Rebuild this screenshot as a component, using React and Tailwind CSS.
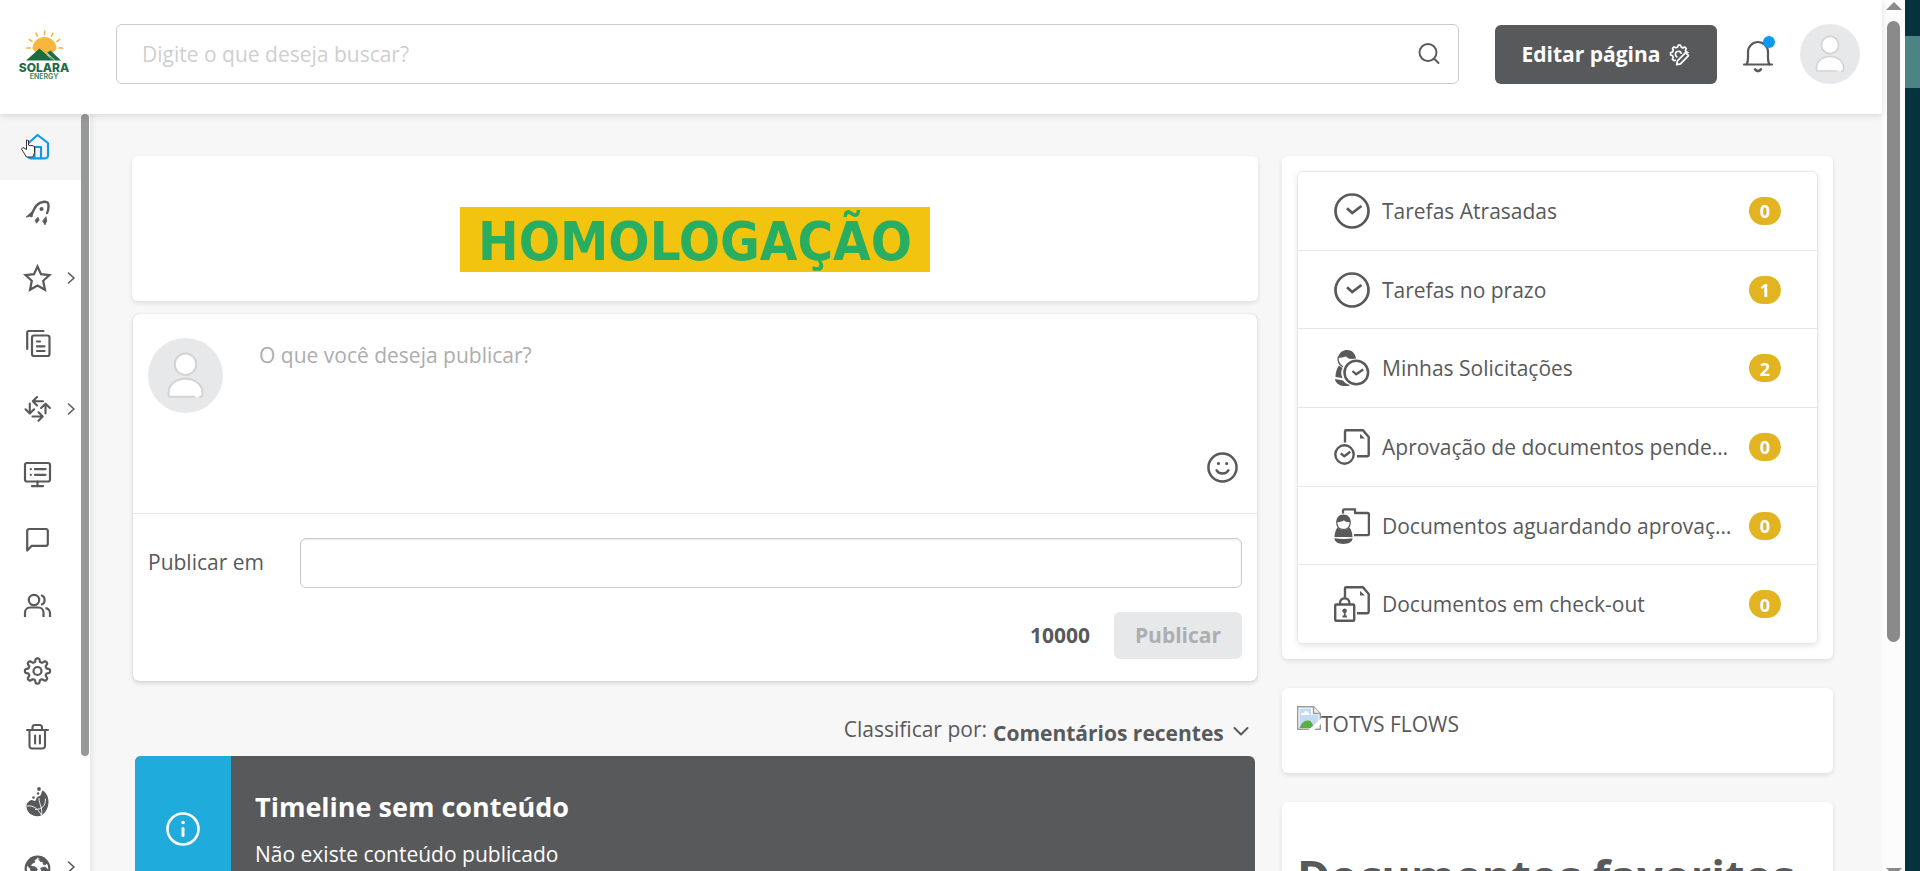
import React from "react";

const gearPoints = (cx, cy, inner, depth, teeth) =>
  Array.from({ length: 160 }, (_, i) => {
    const a = (i / 160) * Math.PI * 2;
    const r = inner + depth * Math.tanh(2.2 * Math.cos(teeth * a));
    return `${(cx + r * Math.cos(a)).toFixed(2)},${(cy + r * Math.sin(a)).toFixed(2)}`;
  }).join(" ");

function Icon({ size = "h-8 w-8", box = "0 0 32 32", width = 2.2, children }) {
  return (
    <svg
      className={`${size} shrink-0`}
      viewBox={box}
      fill="none"
      stroke="currentColor"
      strokeWidth={width}
      strokeLinecap="round"
      strokeLinejoin="round"
      aria-hidden="true"
    >
      {children}
    </svg>
  );
}

const icons = {
  home: (
    <Icon>
      <path d="M6 12.500 15.500 4l10.500 8V24.500a2.800 2.800 0 0 1-2.800 2.800H8.500a2.500 2.500 0 0 1-2.500-2.500z" />
      <path d="M12.500 27V16h6.500v11" />
    </Icon>
  ),
  rocket: (
    <Icon width={2.4}>
      <path d="M9 19c3-3 3-12 13-13.200 4-.300 4.500 1.500 4.500 4.500 0 3-.400 5-1.400 6.700" />
      <path d="M4.500 20.800 11 14.800l-1 6.200-2-.800z" fill="currentColor" strokeWidth="1" />
      <circle cx="19.500" cy="13" r="2" fill="currentColor" stroke="none" />
      <path d="m16 21.500 1.200 2.500-2.700 3.200-1.200-2.700zM24 21l.8 3.800-1.800 4-2.200-3.500z" fill="currentColor" strokeWidth=".8" />
    </Icon>
  ),
  star: (
    <Icon>
      <path strokeLinejoin="miter" d="m15.500 4.500 3.500 7.700 8.500.9-6.300 5.700 1.800 9-7.500-4.300L8 27.800l1.800-9-6.300-5.700 8.500-.9z" />
    </Icon>
  ),
  docs: (
    <Icon>
      <path d="M5.200 22V5.500A1.500 1.500 0 0 1 6.700 4H21.500" />
      <rect x="10" y="8.500" width="17.500" height="20.500" rx="2" />
      <path d="M15 14.500h3M15 19.300h7.500M15 24h7.500" />
    </Icon>
  ),
  flows: (
    <Icon width={2.1}>
      <path d="M21 8.200H11M15 4l-4.200 4.200L15 12.400M23.500 20.500v-9.700M19.100 15l4.400-4.200 4.400 4.200M10.500 23.500h10M16.500 19.300l4.200 4.200-4.200 4.200M7.800 10.500v10M3.500 16.300l4.300 4.300 4.300-4.300" />
    </Icon>
  ),
  monitor: (
    <Icon>
      <rect x="3" y="5" width="25" height="18.500" rx="2" />
      <path d="M15.500 23.500V28M10 28.200h11M8.800 11.200h.1M8.800 16.800h.1M13 11.200h10.500M13 16.800h10.500" />
    </Icon>
  ),
  chat: (
    <Icon>
      <path d="M5.200 26.500V7a2 2 0 0 1 2-2h16.600a2 2 0 0 1 2 2v12.800a2 2 0 0 1-2 2H9.800z" />
    </Icon>
  ),
  users: (
    <Icon>
      <circle cx="12" cy="11" r="5.200" />
      <path strokeLinecap="butt" d="M3 28v-4.500a5 5 0 0 1 5-5h8.500a5 5 0 0 1 5 5V28M19 6.200a5 5 0 0 1 0 9.600M23.500 19.200a5 5 0 0 1 4.500 5V28" />
    </Icon>
  ),
  gear: (
    <Icon>
      <polygon points={gearPoints(15.5, 16, 10.9, 1.7, 8)} />
      <circle cx="15.500" cy="16" r="4" />
    </Icon>
  ),
  trash: (
    <Icon width={2.1}>
      <path d="M5 10h21M10.500 10V7.500A2.500 2.500 0 0 1 13 5h4.500A2.500 2.500 0 0 1 20 7.500V10M7.500 10v16a2.500 2.500 0 0 0 2.500 2.500h10.500A2.500 2.500 0 0 0 23 26V10M13.100 15.500v8M17.900 15.500v8" />
    </Icon>
  ),
  drop: (
    <Icon width={0.9}>
      <path
        d="M20.500 4.500c4 2 6 6.500 6 11.500 0 7-4.500 14.300-11 14.300-6 0-11-4.500-11-9.800 0-3.500 2.500-5.800 5-6.500 1.500-.4 2.200 1.500 3.700.8 1.500-.8.5-3 2.200-3.800 1.500-.7 2-.5 3-1.500.9-1 .8-3 2.100-5z"
        fill="currentColor"
        stroke="none"
      />
      <path d="M5.500 20c5-1 10 2 13.500 8.500M17 12.500c0 6 4 9 2.500 16M23.500 13c0 7-3 10-10 10.500" stroke="#fff" />
      <circle cx="17" cy="3" r="1.900" fill="currentColor" stroke="none" />
      <circle cx="16" cy="7.500" r="1.200" fill="currentColor" stroke="none" />
      <circle cx="11.500" cy="11.500" r="1.300" fill="currentColor" stroke="none" />
    </Icon>
  ),
  globe: (
    <Icon>
      <circle cx="15.500" cy="17.500" r="11.800" />
      <path
        d="M5 14c1.500-5 5-8 9-8.500l1 2-3 1.500 1 2-3 1.500-1.500 2 2 1 3 .5 2 2.500-2 2.500-1 4-3-3-1-4zM18 5.500c4 .5 7 3.500 8.500 7.500l-2-.5-1.500 1.500-2-1 .5-2-3-.5-1.500-2zM19 17l4-1 3.500 3-2 5-3 1-1.500-4z"
        fill="currentColor"
        strokeWidth=".8"
      />
    </Icon>
  ),
};

const menu = [
  { id: "home", label: "Início", active: true },
  { id: "rocket", label: "Primeiros passos" },
  { id: "star", label: "Favoritos", sub: true },
  { id: "docs", label: "Documentos" },
  { id: "flows", label: "Processos", sub: true },
  { id: "monitor", label: "Painel" },
  { id: "chat", label: "Mensagens" },
  { id: "users", label: "Comunidades" },
  { id: "gear", label: "Configurações" },
  { id: "trash", label: "Lixeira" },
  { id: "drop", label: "Identidade" },
  { id: "globe", label: "Portal", sub: true },
];

function ClockIcon() {
  return (
    <Icon size="h-9 w-9" box="0 0 36 36" width={2.7}>
      <circle cx="18" cy="18" r="16.500" />
      <path d="m13 15.300 5.200 4.700L27.500 13" strokeLinecap="butt" strokeLinejoin="miter" strokeWidth="2.700" />
    </Icon>
  );
}

function UserClockIcon() {
  return (
    <Icon size="h-9 w-9" box="0 0 36 36" width={2}>
      <path d="M4 7.500C5.500 2 9 0 13 0c5 0 8 3 9 8.500-4.500 1-8 .5-10-2C9.500 7.500 7 8 4 7.500z" fill="currentColor" stroke="none" />
      <path d="M4.200 7c-.700 4 1.300 7.500 4.300 9.500" strokeWidth="1.300" />
      <path d="M5 15.500 8.500 18c-2 4-1.500 7 0 10L1.500 27C1.500 23 2.500 18.500 5 15.500zM1 29l8 1.500c1.500 2 3.500 3.500 7 4.500-1 1-2.500 1.200-4.500 1.200C6 36 1.500 33.500 1 29z" fill="currentColor" stroke="none" />
      <circle cx="22.300" cy="22.500" r="11.800" strokeWidth="2.500" />
      <path d="m18.500 21 3.700 3.300 7-4.800" strokeLinecap="butt" strokeWidth="2.300" />
    </Icon>
  );
}

function DocCheckIcon() {
  return (
    <Icon size="h-9 w-9" box="0 0 36 36" width={2.4}>
      <path d="M11 13.500V2.500a1.200 1.200 0 0 1 1.200-1.200H29L34.700 8v18a1.200 1.200 0 0 1-1.200 1.200H23" strokeLinecap="butt" />
      <path d="M26 5v4.500h5z" fill="currentColor" stroke="none" />
      <circle cx="10.500" cy="25.500" r="9.200" />
      <path d="m6.800 24.300 3.500 3 6-4.500" strokeLinecap="butt" />
    </Icon>
  );
}

function UserFolderIcon() {
  return (
    <Icon size="h-9 w-9" box="0 0 36 36" width={2.3}>
      <path d="M9 5.500V2.500a1.200 1.200 0 0 1 1.200-1.200H21V5h12.700a1.200 1.200 0 0 1 1.200 1.200V26a1.200 1.200 0 0 1-1.200 1.200H20" strokeLinecap="butt" />
      <path d="M2.200 14.500C2.200 9.500 5 6.500 9.500 6.500s7.300 3 7.300 8c0 4.800-3 7.500-7.300 7.500s-7.300-2.700-7.300-7.500z" fill="currentColor" stroke="none" />
      <path d="M3.400 14.200c3 0 5.600-.8 6.600-1.900 1 1.400 3 1.900 5.600 1.900 0 4.300-2.600 6.600-6.100 6.600s-6.100-2.300-6.100-6.600z" fill="#fff" stroke="none" />
      <path d="M3.500 19.500c3.500 3 8.500 3 12 0 2 2.500 3 6 3 9.500H.5c0-3.500 1-7 3-9.500zM.5 30.300c6 1 12 1 18 0 0 4-4 5.700-9 5.700s-9-1.700-9-5.700z" fill="currentColor" stroke="none" />
    </Icon>
  );
}

function DocLockIcon() {
  return (
    <Icon size="h-9 w-9" box="0 0 36 36" width={2.4}>
      <path d="M11 11V2.500a1.200 1.200 0 0 1 1.200-1.200H29L34.700 8v18a1.200 1.200 0 0 1-1.200 1.200H23" strokeLinecap="butt" />
      <path d="M26 5v4.500h5z" fill="currentColor" stroke="none" />
      <rect x="1.200" y="18.500" width="19" height="16.300" rx="1" />
      <path d="M6 18v-1a4.700 4.700 0 0 1 9.400 0v1" />
      <path d="M8.500 25h2.200v5.500M8.500 30.500h4.400" strokeWidth="1.800" strokeLinecap="butt" />
      <circle cx="10.700" cy="24.700" r="2.200" fill="currentColor" stroke="none" />
    </Icon>
  );
}

const tasks = [
  { label: "Tarefas Atrasadas", count: 0, icon: <ClockIcon /> },
  { label: "Tarefas no prazo", count: 1, icon: <ClockIcon /> },
  { label: "Minhas Solicitações", count: 2, icon: <UserClockIcon /> },
  { label: "Aprovação de documentos pendentes", count: 0, icon: <DocCheckIcon /> },
  { label: "Documentos aguardando aprovação", count: 0, icon: <UserFolderIcon /> },
  { label: "Documentos em check-out", count: 0, icon: <DocLockIcon /> },
];

function Logo() {
  return (
    <svg className="h-[52px] w-[52px]" viewBox="0 0 52 52" role="img" aria-label="Solara Energy">
      <g stroke="#f4b63f" strokeWidth="1.600" strokeLinecap="round">
        <path d="M26.500 3v3.500M18 5.100l1.500 3M35 5.100l-1.500 3M11.300 11.500l2.800 1.800M41.700 11.500l-2.800 1.800M8.700 20h3.600M41 20h3.600" />
      </g>
      <path d="M14.500 21a12 12 0 1 1 24 0l-6 6h-12z" fill="#f6b73c" />
      <path d="M8 32.500 21.500 20.500 35 32.500z" fill="#1c6b43" />
      <path d="M28.500 25 32.500 22.500l10.500 10h-8z" fill="#1c6b43" />
      <path d="m28.500 24.500 8.500 8" stroke="#fff" strokeWidth=".8" />
      <text x="26" y="43.500" textAnchor="middle" fontSize="12" fontWeight="800" fill="#1f6b46" fontFamily="Inter, sans-serif">SOLARA</text>
      <text x="26" y="50.500" textAnchor="middle" fontSize="7" fontWeight="700" fill="#4a8a6c" fontFamily="Inter, sans-serif">ENERGY</text>
    </svg>
  );
}

function Avatar({ size }) {
  return (
    <svg className={`${size} shrink-0`} viewBox="0 0 60 60" aria-hidden="true">
      <circle cx="30" cy="30" r="30" fill="#e7e8ea" />
      <g fill="#fff" stroke="#d3d3d4" strokeWidth="1.600" strokeLinecap="round">
        <circle cx="30" cy="21" r="8.600" />
        <path d="M37 47H17.500a1 1 0 0 1-1-1v-2.500C16.500 37 22.500 32.500 30 32.500s13.500 4.500 13.500 11V46a1 1 0 0 1-1 1h-1" />
      </g>
    </svg>
  );
}

function BrokenImage() {
  return (
    <svg className="h-6 w-6 shrink-0" viewBox="0 0 24 24" aria-hidden="true">
      <path d="M.7.700h15.800L23.300 7.500v15.800H.7z" fill="#fff" stroke="#9a9a9a" strokeWidth="1.400" />
      <path d="M2.500 2.500H14V9h7.500v12.500h-19z" fill="#c3d9f5" />
      <path d="M4 9c0-2 2-2.500 3-2 1-3 4-2 4 0 2 0 2 2 1 2z" fill="#fff" />
      <path d="M2.500 22c2-5 5-8 9-7.500 3 .5 3 2 6 7.500z" fill="#5aae42" />
      <path d="M16.500.7v6.800h6.800" fill="#eee" stroke="#9a9a9a" strokeWidth="1.400" />
      <path d="M24 12.500 11.500 24H17l7-6z" fill="#fff" />
    </svg>
  );
}

function Header() {
  return (
    <header className="relative z-10 flex h-[114px] shrink-0 items-center bg-white pr-[22px] pb-[6px] shadow-[0_2px_6px_rgba(0,0,0,0.12)]">
      <a href="#inicio" className="ml-[18px] shrink-0">
        <Logo />
      </a>
      <label className="ml-[46px] flex h-[60px] flex-1 items-center rounded-md border border-[#c9cbcc] bg-white pr-[17px] pl-[25px]">
        <input
          type="search"
          aria-label="Buscar"
          placeholder="Digite o que deseja buscar?"
          className="min-w-0 flex-1 bg-transparent text-[21px] leading-[30px] outline-none placeholder:text-[#cfcfcf]"
        />
        <Icon size="h-6 w-6" box="0 0 24 24" width={1.9}>
          <circle cx="11" cy="10.500" r="8.500" />
          <path d="m17.500 17 4 4" />
        </Icon>
      </label>
      <button type="button" className="ml-9 flex h-[59px] w-[222px] items-center justify-center gap-2 rounded-md bg-[#58595b] pt-px text-[21px] font-bold text-white">
        Editar página
        <Icon size="h-[22px] w-[22px]" box="0 0 22 22" width={1.7}>
          <path d="M20 8.500 18.200 8l-.8-1.600.9-1.900-1.500-1.500-2 .9-1.500-.6L12.500 1.200h-2.200L9.500 3.200l-1.600.6-1.900-.9-1.500 1.500.8 2-.7 1.500-2 .8v2.200l2 .8.6 1.500-.8 2 1.500 1.500 1.300-.5" />
          <path d="m17.600 8.700 2.900 2.900-8 8.200-3.800.9.700-3.800zM8.800 12.800a3 3 0 1 1 4.400-3.600" />
        </Icon>
      </button>
      <button type="button" aria-label="Notificações" className="relative ml-6 h-10 w-[34px]">
        <Icon size="h-10 w-[34px]" box="0 0 34 40" width={2.2}>
          <path d="M3 30.500h28M5.500 30.500c1.500-2 1.500-3.500 1.500-7V18a10 10 0 0 1 20 0v5.500c0 3.500 0 5 1.500 7" />
          <path d="M14.200 35.500c1.500 2 4 2 5.600 0" strokeWidth="2.800" />
        </Icon>
        <span className="absolute top-[2px] right-0 h-3 w-3 rounded-full bg-[#0c9af0]" />
      </button>
      <button type="button" aria-label="Perfil" className="ml-[25px] rounded-full">
        <Avatar size="h-[60px] w-[60px]" />
      </button>
    </header>
  );
}

function Sidebar() {
  return (
    <div className="flex h-[786px] shrink-0 bg-white shadow-[2px_0_6px_rgba(0,0,0,0.08)]">
      <nav aria-label="Menu principal" className="flex w-[81px] flex-col">
        {menu.map((item) => (
          <a
            key={item.id}
            href={`#${item.id}`}
            aria-label={item.label}
            className={
              item.active
                ? "relative flex flex-1 items-center bg-[#f5f5f5] pl-[22px] text-[#0c9af0]"
                : "relative flex flex-1 items-center pl-[22px] text-[#58595b]"
            }
          >
            {icons[item.id]}
            {item.sub && (
              <Icon size="ml-3 h-3 w-[10px]" box="0 0 10 12" width={1.6}>
                <path d="m2.500 1 5.500 5-5.500 5" />
              </Icon>
            )}
            {item.active && (
              <svg className="absolute top-6 left-5 h-[22px] w-4" viewBox="0 0 16 22" fill="#fff" stroke="#333" strokeWidth="1" strokeLinejoin="round" aria-hidden="true">
                <path d="M6.500 2v9.500L3 9.500l-1.500 1.500 5 8h6.500l1.500-4.500V8.500L12 7.500l-2 .2-1.500-.7V2.500z" />
              </svg>
            )}
          </a>
        ))}
      </nav>
      <div className="w-[9px]">
        <div className="h-[642px] w-2 rounded-full bg-[#979998]" />
      </div>
    </div>
  );
}

const card = "rounded-md bg-white shadow-[0_2px_5px_rgba(0,0,0,0.1)]";

function Composer() {
  return (
    <form className="mx-px rounded-md bg-white shadow-[0_2px_5px_rgba(0,0,0,0.14),0_0_1px_rgba(0,0,0,0.22)]">
      <div className="flex h-[200px] border-b border-[#e6e7e8] px-[15px] pt-6 pb-[30px]">
        <Avatar size="h-[75px] w-[75px]" />
        <textarea
          aria-label="Publicação"
          placeholder="O que você deseja publicar?"
          className="ml-9 h-[110px] flex-1 resize-none text-[21px] leading-[34px] outline-none placeholder:text-[#adadae]"
        />
        <button type="button" aria-label="Inserir emoji" className="mr-1 self-end">
          <Icon size="h-[31px] w-[31px]" box="0 0 30 30" width={2.4}>
            <circle cx="15" cy="15" r="13.600" />
            <path d="M9.300 17.700c2.200 4.200 9.200 4.200 11.400 0" />
            <path d="M11 11.200h.1M19 11.200h.1" strokeWidth="3" />
          </Icon>
        </button>
      </div>
      <div className="px-[15px] pt-6 pb-[22px]">
        <div className="flex items-center">
          <label htmlFor="target" className="w-[152px] text-[21px]">Publicar em</label>
          <input id="target" type="text" className="h-[50px] flex-1 rounded-md border border-[#c9cbcc] bg-white px-3 text-[21px] shadow-[inset_0_1px_2px_rgba(0,0,0,0.08)] outline-none" />
        </div>
        <div className="mt-6 flex items-center justify-end gap-6">
          <span className="text-[21px] font-bold">10000</span>
          <button type="submit" disabled className="h-[47px] w-32 rounded-md bg-[#e7e8ea] pt-px text-[21px] font-bold text-[#adaeb2]">
            Publicar
          </button>
        </div>
      </div>
    </form>
  );
}

function Timeline() {
  return (
    <section className="mx-[3px]">
      <div className="flex items-start justify-end">
        <label htmlFor="sort" className="text-[21px] leading-[30px]">Classificar por:</label>
        <div className="relative ml-[6px] pt-1">
          <select id="sort" className="appearance-none bg-transparent pr-[31px] text-[21px] leading-[30px] font-bold outline-none">
            <option>Comentários recentes</option>
          </select>
          <span className="pointer-events-none absolute top-3 right-[6px]">
            <Icon size="h-[11px] w-4" box="0 0 16 11" width={2}>
              <path d="m1.500 2 6.500 6.500L14.500 2" />
            </Icon>
          </span>
        </div>
      </div>
      <div className="mt-2 flex h-[146px] overflow-hidden rounded-md bg-[#58595b] text-white">
        <div className="flex w-24 items-center justify-center bg-[#1fabdc]">
          <Icon size="h-9 w-9" box="0 0 36 36" width={2.6}>
            <circle cx="18" cy="18" r="15.500" />
            <path d="M18 17.500v7" strokeWidth="3" />
            <path d="M18 11.500h.1" strokeWidth="3.500" />
          </Icon>
        </div>
        <div className="px-6 pt-8">
          <h2 className="text-[27px] leading-[38px] font-bold">Timeline sem conteúdo</h2>
          <p className="mt-[13px] text-[21px] leading-[30px]">Não existe conteúdo publicado</p>
        </div>
      </div>
    </section>
  );
}

export default function App() {
  return (
    <div className="flex h-screen overflow-hidden bg-[#f7f7f7] font-['Open_Sans','Noto_Sans',sans-serif] text-[#58595b]">
      <div className="flex min-w-0 flex-1 flex-col">
        <Header />
        <div className="flex min-h-0 flex-1 overflow-hidden">
          <Sidebar />
          <main className="grid flex-1 grid-cols-[1126fr_551fr] items-start gap-6 pt-[42px] pr-[49px] pl-[42px]">
            <div className="flex min-w-0 flex-col">
              <section className={`${card} flex h-[145px] items-start justify-center pt-[51px]`}>
                <h1 className="bg-[#f2c40f] px-[18px] pt-[5px] font-['DejaVu_Sans_Condensed','DejaVu_Sans',sans-serif] text-[54px] leading-[60px] font-bold text-[#27ae60]">
                  HOMOLOGAÇÃO
                </h1>
              </section>
              <div className="mt-[13px]">
                <Composer />
              </div>
              <div className="mt-[33px]">
                <Timeline />
              </div>
            </div>
            <aside className="flex min-w-0 flex-col gap-[29px]">
              <section className={`${card} p-[15px]`}>
                <ul className="flex h-[473px] flex-col divide-y divide-[#e6e7e8] rounded-md border border-[#e6e7e8] shadow-[0_2px_6px_rgba(0,0,0,0.1)]">
                  {tasks.map((t) => (
                    <li key={t.label} className="flex flex-1">
                      <a href="#tarefas" className="flex min-w-0 flex-1 items-center px-9">
                        {t.icon}
                        <span className="mr-4 ml-3 flex-1 truncate text-[21px] leading-[30px]">{t.label}</span>
                        <span className="flex h-7 w-8 items-center justify-center rounded-full bg-[#e2b421] pt-px text-[18px] leading-7 font-bold text-white">
                          {t.count}
                        </span>
                      </a>
                    </li>
                  ))}
                </ul>
              </section>
              <section className={`${card} flex h-[85px] items-start px-[15px] pt-[18px]`}>
                <BrokenImage />
                <span className="pt-[3px] text-[21px] leading-[30px]">TOTVS FLOWS</span>
              </section>
              <section className={`${card} px-[15px] pt-[42px] pb-6`}>
                <h2 className="text-[45px] leading-[64px] font-bold whitespace-nowrap">Documentos favoritos</h2>
              </section>
            </aside>
          </main>
        </div>
      </div>
      <div className="flex w-[23px] shrink-0 flex-col items-center bg-[#fcfcfc]" aria-hidden="true">
        <svg className="mt-[2px] h-2 w-4" viewBox="0 0 16 8"><path d="M8 0l8 8H0z" fill="#8a8a8a" /></svg>
        <div className="mt-[11px] h-[621px] w-[13px] rounded-full bg-[#8a8a8a]" />
        <svg className="mt-auto h-[3px] w-4" viewBox="0 0 16 3"><path d="M0 0h16l-3 3H3z" fill="#8a8a8a" /></svg>
      </div>
      <div className="w-[15px] shrink-0 bg-[#04333d] pt-9" aria-hidden="true">
        <div className="h-[52px] bg-[#4c8484]" />
      </div>
    </div>
  );
}
